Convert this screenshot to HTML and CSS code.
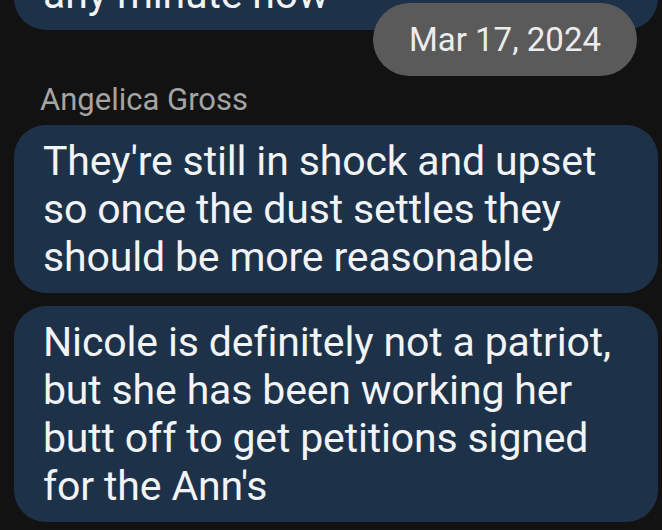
FILE: index.html
```html
<!DOCTYPE html>
<html lang="en">
<head>
<meta charset="utf-8">
<title>Messages</title>
<link rel="stylesheet" href="styles.css">
</head>
<body>
<main class="chat">
  <div class="bubble bubble-prev">any minute now</div>
  <div class="date-row"><span class="date-pill">Mar 17, 2024</span></div>
  <div class="sender">Angelica Gross</div>
  <div class="bubble">They're still in shock and upset<br>so once the dust settles they<br>should be more reasonable</div>
  <div class="bubble">Nicole is definitely not a patriot,<br>but she has been working her<br>butt off to get petitions signed<br>for the Ann's</div>
</main>
</body>
</html>
```
FILE: styles.css
```css
html, body {
  margin: 0;
  padding: 0;
  background: #121212;
}

body {
  width: 662px;
  height: 530px;
  overflow: hidden;
  font-family: Roboto, "Noto Sans", sans-serif;
}

.chat {
  display: flex;
  flex-direction: column;
}

.bubble {
  background: #1d3249;
  color: #f1f3f5;
  font-size: 41px;
  line-height: 48px;
  padding: 12px 20px 12px 29px;
  margin: 0 4px 0 14px;
  border-radius: 32px;
  white-space: nowrap;
  letter-spacing: -0.15px;
}

.bubble + .bubble {
  margin-top: 13px;
}

.bubble-prev {
  margin-top: -42px;
}

.date-row {
  display: flex;
  justify-content: flex-end;
  margin-top: -27px;
  margin-right: 25px;
  position: relative;
  z-index: 1;
}

.date-pill {
  background: #5a5a5a;
  color: #ececec;
  font-size: 33px;
  line-height: 73px;
  height: 73px;
  padding: 0 36px;
  border-radius: 37px;
}

.sender {
  color: #a4a4a4;
  font-size: 31px;
  line-height: 34px;
  margin: 7px 0 8px 40px;
}
```
